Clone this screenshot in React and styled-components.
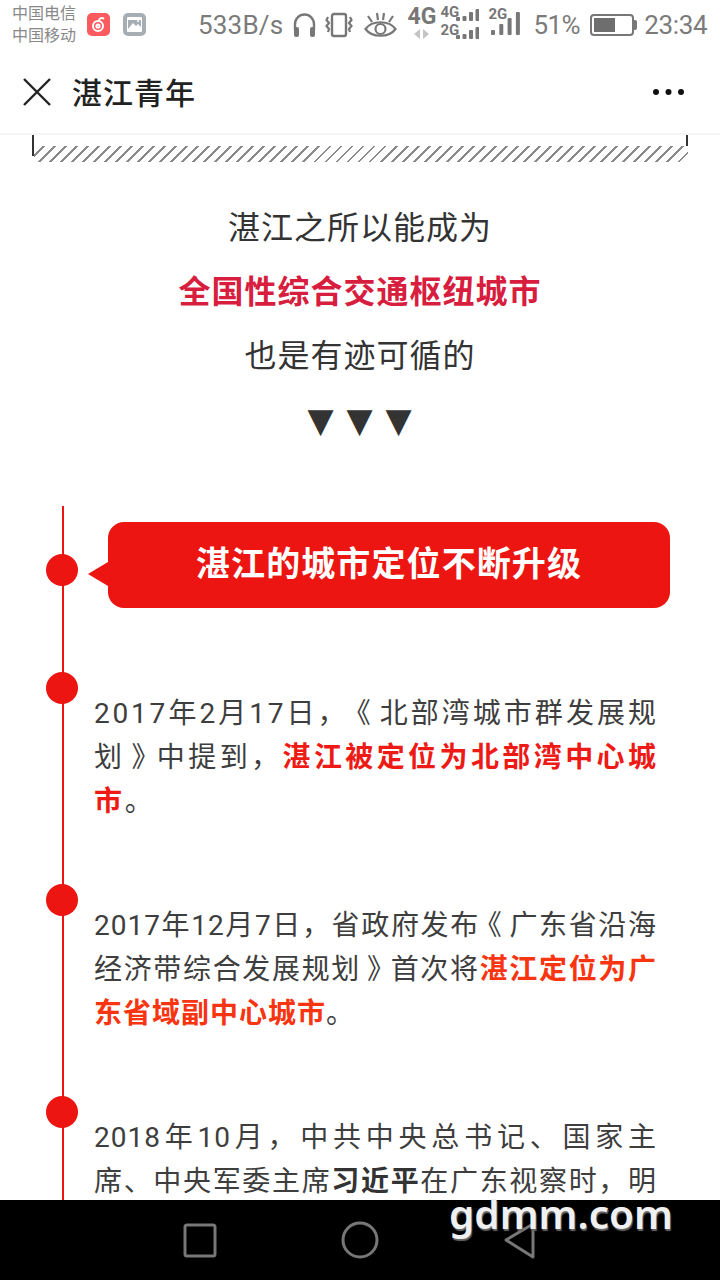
import styled, { createGlobalStyle } from "styled-components";

const Global = createGlobalStyle`
  html, body { margin: 0; padding: 0; background: #fff; }
  * { box-sizing: border-box; }
`;

const CJK = `Roboto, "Noto Sans CJK SC", "Noto Sans", sans-serif`;

const Page = styled.div`
  width: 720px;
  height: 1280px;
  display: flex;
  flex-direction: column;
  overflow: hidden;
  position: relative;
  font-family: ${CJK};
  background: #fff;
  text-spacing-trim: space-all;
`;

const StatusBar = styled.div`
  height: 50px;
  flex: none;
  display: flex;
  align-items: center;
  padding: 0 12px;
  color: #777;
  font-family: Roboto, sans-serif;
`;

const Carriers = styled.div`
  width: 64px;
  font: 16px/22px ${CJK};
  color: #888;
  white-space: nowrap;
`;

const AppBadge = styled.div`
  width: 23px;
  height: 23px;
  flex: none;
  border-radius: 5px;
  background: ${p => p.color};
  margin: 0 0 2px ${p => p.left}px;
  display: flex;
  align-items: center;
  justify-content: center;
`;

const StatusText = styled.span`
  font-size: 26px;
  letter-spacing: ${p => p.spacing ?? 0.2}px;
  margin-left: ${p => p.left || 0}px;
  color: #7b7b7b;
  white-space: nowrap;
`;

const StatusIcon = styled.svg`
  flex: none;
  margin-left: ${p => p.left || 0}px;
  display: block;
`;

const NetBig = styled.div`
  margin-left: 11px;
  width: 27px;
  height: 40px;
  flex: none;
  display: flex;
  flex-direction: column;
  align-items: center;
  font: 700 23px/24px Roboto, sans-serif;
  color: #777;
`;

const NetRows = styled.div`
  margin: 0 0 6px 5px;
  flex: none;
  display: flex;
  flex-direction: column;
  gap: 2px;
`;

const NetRow = styled.div`
  height: 16px;
  display: flex;
  align-items: flex-end;
`;

const NetLabel = styled.span`
  font: 700 15px/15px Roboto, sans-serif;
  color: #777;
  width: 16px;
  align-self: flex-start;
`;

const SimTwo = styled.div`
  margin: 0 0 8px 9px;
  width: 33px;
  height: 28px;
  padding-left: 3px;
  flex: none;
  position: relative;
`;

const SimLabel = styled.span`
  position: absolute;
  left: 0;
  top: 0;
  font: 700 15px/15px Roboto, sans-serif;
  color: #777;
`;

const Battery = styled.div`
  margin-left: 10px;
  width: 44px;
  height: 22px;
  flex: none;
  border: 2px solid #777;
  border-radius: 4px;
  padding: 2px;
  position: relative;
  &::after {
    content: "";
    position: absolute;
    right: -5px;
    top: 4px;
    width: 3px;
    height: 10px;
    background: #777;
    border-radius: 0 2px 2px 0;
  }
`;

const BatteryFill = styled.div`
  height: 100%;
  background: #6e6e6e;
`;

const Header = styled.div`
  height: 85px;
  flex: none;
  display: flex;
  align-items: center;
  padding: 0 34px 0 22px;
  border-bottom: 2px solid #f5f5f5;
`;

const Title = styled.div`
  font-size: 30px;
  font-weight: 500;
  color: #222;
  margin: 0 0 2px 20px;
  flex: 1;
  letter-spacing: 1px;
`;

const Content = styled.div`
  flex: 1;
  min-height: 0;
  overflow: hidden;
  display: flex;
  flex-direction: column;
`;

const Frame = styled.div`
  margin: 0 32px;
  height: 27px;
  flex: none;
  position: relative;
`;

const FrameEdge = styled.div`
  position: absolute;
  ${p => p.side}: 0;
  top: -1px;
  width: 2px;
  height: ${p => p.h}px;
  background: #333;
`;

const Hatch = styled.div`
  position: absolute;
  left: 2px;
  right: 0;
  top: 11px;
  height: 16px;
  background: repeating-linear-gradient(
    135deg,
    #fff 0 5.8px,
    #8a8a8a 5.8px 7.8px
  );
`;

const Intro = styled.div`
  margin-top: 34px;
  text-align: center;
  color: #333;
  font-size: 32px;
  line-height: 64px;
  letter-spacing: 1px;
  flex: none;
`;

const Strong = styled.div`
  font-weight: 700;
  color: #d81e3f;
`;

const Arrows = styled.div`
  font: 34px/64px "DejaVu Sans", sans-serif;
  letter-spacing: 1px;
  color: #333;
`;

const Timeline = styled.div`
  margin-top: 54px;
  flex: 1;
  padding: 0 50px 0 46px;
  position: relative;
  &::before {
    content: "";
    position: absolute;
    left: 62px;
    top: 0;
    bottom: 0;
    width: 2px;
    background: #ec1512;
  }
`;

const Item = styled.div`
  display: grid;
  grid-template-columns: 32px 1fr;
  column-gap: 16px;
  margin-bottom: ${p => p.gap}px;
`;

const Dot = styled.div`
  width: 32px;
  height: 32px;
  border-radius: 50%;
  background: #ec1512;
  position: relative;
  margin-top: ${p => p.top || 0}px;
`;

const Bubble = styled.div`
  margin: 16px 0 0 14px;
  width: 562px;
  height: 86px;
  padding-bottom: 8px;
  background: #ec1512;
  border-radius: 16px;
  color: #fff;
  font-size: 34px;
  font-weight: 700;
  letter-spacing: 1.1px;
  display: flex;
  align-items: center;
  justify-content: center;
  position: relative;
  &::before {
    content: "";
    position: absolute;
    left: -20px;
    top: 40px;
    border-style: solid;
    border-width: 12px 20px 12px 0;
    border-color: transparent #ec1512 transparent transparent;
  }
`;

const Para = styled.div`
  margin-top: 20px;
  width: ${p => 562 + (p.spacing || 1)}px;
  font-size: 28px;
  line-height: 44px;
  color: #3e3e3e;
  letter-spacing: ${p => p.spacing || 1}px;
`;

const Line = styled.div`
  text-align: justify;
  text-align-last: ${p => (p.last ? "left" : "justify")};
  white-space: nowrap;
`;

// half-width glyph with margins, the book-title marks sit centred in the picture
const Quote = styled.span`
  font-feature-settings: "halt" 1;
  margin: ${p => (p.open ? "0 6px 0 8px" : "0 8px 0 6px")};
`;

const Red = styled.span`
  font-weight: 700;
  color: ${p => p.color || "#ee1a16"};
`;

const Bold = styled.span`
  font-weight: 700;
  color: #333;
`;

const NavBar = styled.div`
  height: 80px;
  flex: none;
  background: #000;
  display: flex;
  align-items: center;
  gap: 124px;
  padding-left: 183px;
  position: relative;
`;

const Watermark = styled.div`
  position: absolute;
  left: 449px;
  top: 2px;
  font: 600 40.5px/24px "Noto Sans", sans-serif;
  color: #f0f0f0;
  text-shadow: 1px 2px 1px #666;
`;

function Bars({ w, h, barW, step, heights }) {
  return (
    <svg width={w} height={h} viewBox={`0 0 ${w} ${h}`} fill="#777">
      {heights.map((b, i) => (
        <rect key={i} x={i * step} y={h - b} width={barW} height={b} rx="1" />
      ))}
    </svg>
  );
}

function StatusLine() {
  return (
    <StatusBar>
      <Carriers>中国电信<br />中国移动</Carriers>
      <AppBadge color="#fb5a5e" left={11}>
        <svg width="17" height="17" viewBox="0 0 17 17" fill="none" stroke="#fff" strokeWidth="2">
          <circle cx="8" cy="10" r="5" />
          <circle cx="8" cy="10" r="1.6" />
          <path d="M9 5 C9 2 12 1 14 3" />
        </svg>
      </AppBadge>
      <AppBadge color="#a6aeb4" left={13}>
        <svg width="15" height="15" viewBox="0 0 15 15">
          <rect width="15" height="15" rx="1" fill="#fff" />
          <path d="M1 12 L6 6 L9 9 L11 7 L14 10 V3 H1 Z" fill="#a6aeb4" />
          <circle cx="11" cy="4" r="1" fill="#fff" />
        </svg>
      </AppBadge>
      <StatusText left={52}>533B/s</StatusText>
      <StatusIcon left={9} width="25" height="25" viewBox="0 0 25 25" fill="none" stroke="#777" strokeWidth="2.4">
        <path d="M3 17 V11 a9.5 9.5 0 0 1 19 0 V17" />
        <rect x="2" y="14" width="5" height="10" rx="2" fill="#777" stroke="none" />
        <rect x="18" y="14" width="5" height="10" rx="2" fill="#777" stroke="none" />
      </StatusIcon>
      <StatusIcon left={8} width="28" height="26" viewBox="0 0 28 26" fill="none" stroke="#777" strokeWidth="2.4">
        <rect x="7" y="2" width="14" height="22" rx="2" />
        <path d="M3 5 l-1.5 3 l2.5 3 l-2.5 3 l2.5 3 l-1 3 M25 5 l1.5 3 l-2.5 3 l2.5 3 l-2.5 3 l1 3" strokeWidth="2.2" />
      </StatusIcon>
      <StatusIcon left={11} width="33" height="27" viewBox="0 0 33 27" fill="none" stroke="#777" strokeWidth="2.2">
        <path d="M1.5 17 C8 8 25 8 31.5 17 C25 26 8 26 1.5 17 Z" />
        <circle cx="16.5" cy="17" r="5" />
        <path d="M4 4 L8 10 M13 1 L14 8 M20 1 L19 8 M29 4 L25 10" />
      </StatusIcon>
      <NetBig>
        4G
        <svg width="17" height="10" viewBox="0 0 17 10" fill="#c4c4c4">
          <path d="M7 0 V10 L1 5 Z M10 0 V10 L16 5 Z" />
        </svg>
      </NetBig>
      <NetRows>
        <NetRow>
          <NetLabel>4G</NetLabel>
          <Bars w={23} h={12} barW={4} step={6.5} heights={[4, 5, 9, 12]} />
        </NetRow>
        <NetRow>
          <NetLabel>2G</NetLabel>
          <Bars w={23} h={12} barW={4} step={6.5} heights={[4, 5, 9, 12]} />
        </NetRow>
      </NetRows>
      <SimTwo>
        <SimLabel>2G</SimLabel>
        <Bars w={30} h={28} barW={4} step={8.3} heights={[5, 11, 17, 23]} />
      </SimTwo>
      <StatusText left={12} spacing={-0.5}>51%</StatusText>
      <Battery>
        <BatteryFill style={{ width: "58%" }} />
      </Battery>
      <StatusText left={10} spacing={-0.3}>23:34</StatusText>
    </StatusBar>
  );
}

function NavIcons() {
  return (
    <NavBar>
      <svg width="34" height="35" viewBox="0 0 34 35" fill="none" stroke="#777" strokeWidth="3">
        <rect x="2" y="2" width="30" height="31" rx="2" />
      </svg>
      <svg width="38" height="38" viewBox="0 0 38 38" fill="none" stroke="#777" strokeWidth="3">
        <circle cx="19" cy="19" r="17" />
      </svg>
      <svg width="34" height="38" viewBox="0 0 34 38" fill="none" stroke="#777" strokeWidth="3" strokeLinejoin="round">
        <path d="M3 19 L30 3 V36 Z" />
      </svg>
      <Watermark>gdmm.com</Watermark>
    </NavBar>
  );
}

export default function App() {
  return (
    <Page>
      <Global />
      <StatusLine />
      <Header>
        <svg width="30" height="30" viewBox="0 0 30 30" stroke="#222" strokeWidth="2.4">
          <path d="M2 2 L28 28 M28 2 L2 28" />
        </svg>
        <Title>湛江青年</Title>
        <svg width="34" height="8" viewBox="0 0 34 8" fill="#111">
          <circle cx="4" cy="4" r="3" />
          <circle cx="16.5" cy="4" r="3" />
          <circle cx="29" cy="4" r="3" />
        </svg>
      </Header>
      <Content>
        <Frame>
          <Hatch />
          <FrameEdge side="left" h={22} />
          <FrameEdge side="right" h={12} />
        </Frame>
        <Intro>
          <div>湛江之所以能成为</div>
          <Strong>全国性综合交通枢纽城市</Strong>
          <div>也是有迹可循的</div>
          <Arrows>▼ ▼ ▼</Arrows>
        </Intro>
        <Timeline>
          <Item gap={64}>
            <Dot top={48} />
            <Bubble>湛江的城市定位不断升级</Bubble>
          </Item>
          <Item gap={60}>
            <Dot />
            <Para spacing={2.8}>
              <Line>2017年2月17日，<Quote open>《</Quote>北部湾城市群发展规</Line>
              <Line>划<Quote>》</Quote>中提到，<Red>湛江被定位为北部湾中心城</Red></Line>
              <Line last><Red>市</Red>。</Line>
            </Para>
          </Item>
          <Item gap={60}>
            <Dot />
            <Para>
              <Line>2017年12月7日，省政府发布<Quote open>《</Quote>广东省沿海</Line>
              <Line>经济带综合发展规划<Quote>》</Quote>首次将<Red color="#f93410">湛江定位为广</Red></Line>
              <Line last><Red color="#f93410">东省域副中心城市</Red>。</Line>
            </Para>
          </Item>
          <Item gap={0}>
            <Dot />
            <Para>
              <Line>2018年10月，中共中央总书记、国家主</Line>
              <Line>席、中央军委主席<Bold>习近平</Bold>在广东视察时，明</Line>
            </Para>
          </Item>
        </Timeline>
      </Content>
      <NavIcons />
    </Page>
  );
}
